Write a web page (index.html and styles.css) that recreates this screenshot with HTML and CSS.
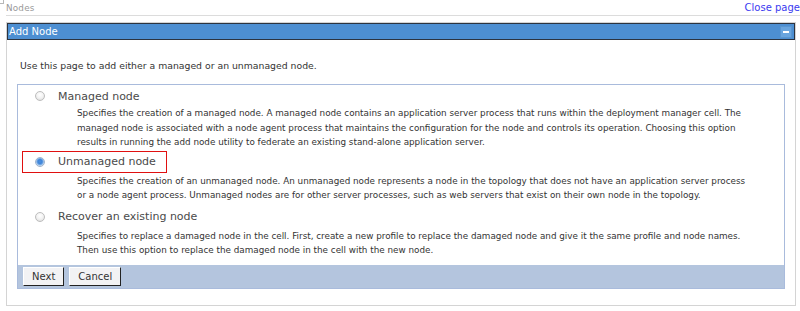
FILE: index.html
```html
<!DOCTYPE html>
<html>
<head>
<meta charset="utf-8">
<link rel="stylesheet" href="styles.css">
</head>
<body>
<div class="grip"></div>
<div class="topbar">
  <span class="crumb">Nodes</span>
  <a class="close" href="#">Close page</a>
</div>
<div class="portlet">
  <div class="phead">
    <span class="ptitle">Add Node</span>
    <span class="pmin"><span></span></span>
  </div>
  <div class="pbody">
    <p class="intro">Use this page to add either a managed or an unmanaged node.</p>
    <div class="panel">
      <div class="option first">
        <div class="row"><span class="radio"></span><span class="label">Managed node</span></div>
        <div class="desc">Specifies the creation of a managed node. A managed node contains an application server process that runs within the deployment manager cell. The<br>managed node is associated with a node agent process that maintains the configuration for the node and controls its operation. Choosing this option<br>results in running the add node utility to federate an existing stand-alone application server.</div>
      </div>
      <div class="option sel">
        <div class="row hlrow"><span class="hl"><span class="radio checked"></span><span class="label">Unmanaged node</span></span></div>
        <div class="desc">Specifies the creation of an unmanaged node. An unmanaged node represents a node in the topology that does not have an application server process<br>or a node agent process. Unmanaged nodes are for other server processes, such as web servers that exist on their own node in the topology.</div>
      </div>
      <div class="option last">
        <div class="row"><span class="radio"></span><span class="label">Recover an existing node</span></div>
        <div class="desc">Specifies to replace a damaged node in the cell. First, create a new profile to replace the damaged node and give it the same profile and node names.<br>Then use this option to replace the damaged node in the cell with the new node.</div>
      </div>
      <div class="buttons">
        <button class="btn">Next</button>
        <button class="btn">Cancel</button>
      </div>
    </div>
  </div>
</div>
</body>
</html>
```
FILE: styles.css
```css
html, body {
  margin: 0;
  padding: 0;
  background: #fff;
}
body {
  font-family: "DejaVu Sans", sans-serif;
  color: #333;
  width: 800px;
  height: 311px;
  overflow: hidden;
  position: relative;
}
.grip {
  position: absolute;
  left: 0;
  top: 0;
  width: 3px;
  height: 3px;
  border-right: 1px solid #888;
  border-bottom: 1px solid #888;
  opacity: 0.6;
}
.topbar {
  height: 15px;
  border-bottom: 1px solid #dcdcdc;
  display: flex;
  justify-content: space-between;
  align-items: center;
  margin-left: 6px;
}
.crumb {
  font-size: 8.8px;
  color: #999;
  letter-spacing: 0.2px;
}
.close {
  font-size: 10px;
  color: #3a3af0;
  text-decoration: none;
}
.portlet {
  margin: 6px 4px 0 6px;
  border: 1px solid #d4d4d4;
  height: 282px;
}
.phead {
  height: 15px;
  border: 1px solid #2c3440;
  background: #4d8fd2;
  display: flex;
  align-items: center;
  justify-content: space-between;
}
.ptitle {
  color: #fff;
  font-size: 10px;
  padding-left: 1px;
}
.pmin {
  width: 10px;
  height: 10px;
  margin-right: 2px;
  background: #6aa5de;
  border: 1px solid #5a96d0;
  display: flex;
  align-items: center;
  justify-content: center;
}
.pmin span {
  width: 6px;
  height: 2px;
  background: #fff;
}
.pbody {
  padding: 20px 10px 0 10px;
}
.intro {
  margin: 0 0 12px 3px;
  font-size: 9.3px;
  line-height: 12px;
}
.panel {
  border: 1px solid #a9bbdc;
  padding-top: 1px;
}
.option {
  margin-bottom: 0;
}
.option.first {
  margin-bottom: 1px;
}
.option.sel {
  margin-bottom: 4px;
}
.option.sel .desc {
  margin-top: 1px;
}
.row {
  height: 20px;
  display: flex;
  align-items: center;
  padding-left: 17px;
}
.row.hlrow {
  height: 22px;
}
.hl {
  display: flex;
  align-items: center;
  box-sizing: border-box;
  height: 22px;
  margin-left: -13px;
  padding-left: 12px;
  padding-right: 10px;
  border: 1px solid #e01010;
}
.option.last .desc {
  margin-top: 2px;
}
.radio {
  width: 10px;
  height: 10px;
  border-radius: 50%;
  border: 1px solid #bdbdbd;
  background: radial-gradient(circle at 50% 35%, #ffffff 0%, #f2f2f2 50%, #d6d6d6 100%);
  box-sizing: border-box;
  flex: none;
}
.radio.checked {
  border-color: #9fb3cc;
  background: radial-gradient(circle at 50% 45%, #4a8ee0 0%, #3f85d8 35%, #7fb0e8 55%, #dfe9f4 75%, #eef2f7 100%);
}
.label {
  font-size: 11px;
  margin-left: 13px;
  color: #4a4a4a;
  white-space: nowrap;
}
.desc {
  margin-left: 59px;
  font-size: 8.8px;
  line-height: 14.5px;
  white-space: nowrap;
  color: #333;
}
.buttons {
  background: #b4c5de;
  height: 23px;
  margin-top: 7px;
  display: flex;
  align-items: center;
  padding-left: 5px;
  gap: 5px;
}
.btn {
  font-family: "DejaVu Sans", sans-serif;
  font-size: 10px;
  color: #333;
  height: 19px;
  padding: 0 8px;
  background: #f2f2f4;
  border: 1px solid;
  border-color: #fff #222 #222 #fff;
  border-radius: 0;
}
```
